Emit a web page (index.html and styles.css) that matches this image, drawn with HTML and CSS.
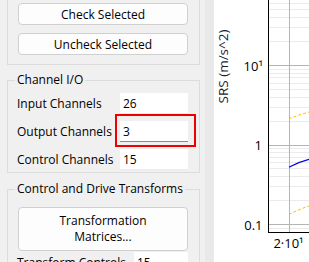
FILE: index.html
```html
<!DOCTYPE html>
<html lang="en">
<head>
  <meta charset="UTF-8" />
  <meta name="viewport" content="width=device-width, initial-scale=1.0"/>
  <title>Channel Setup</title>
  <link rel="stylesheet" href="styles.css">
</head>
<body>

  <div class="panel">
    <fieldset class="group group-top">
      <button class="btn">Check Selected</button>
      <button class="btn">Uncheck Selected</button>
    </fieldset>

    <fieldset class="group group-io">
      <legend>Channel I/O</legend>
      <div class="fields">
        <label>Input Channels</label>
        <input class="num" type="text" value="26">
        <label>Output Channels</label>
        <span class="marked">
          <input class="num focused" type="text" value="3">
          <span class="highlight"></span>
        </span>
        <label>Control Channels</label>
        <input class="num" type="text" value="15">
      </div>
    </fieldset>

    <fieldset class="group group-transforms">
      <legend>Control and Drive Transforms</legend>
      <button class="btn btn-tall">Transformation<br>Matrices...</button>
      <div class="fields fields-transform">
        <label>Transform Controls</label>
        <input class="num" type="text" value="15">
      </div>
    </fieldset>
  </div>

  <div class="splitter"></div>

  <div class="plot">
    <svg width="95" height="262" viewBox="0 0 95 262">
      <g class="minor">
        <line x1="54" x2="95" y1="3.5" y2="3.5"/>
        <line x1="54" x2="95" y1="9.5" y2="9.5"/>
        <line x1="54" x2="95" y1="17.5" y2="17.5"/>
        <line x1="54" x2="95" y1="27.5" y2="27.5"/>
        <line x1="54" x2="95" y1="41.5" y2="41.5"/>
        <line x1="54" x2="95" y1="69.5" y2="69.5"/>
        <line x1="54" x2="95" y1="73.5" y2="73.5"/>
        <line x1="54" x2="95" y1="77.5" y2="77.5"/>
        <line x1="54" x2="95" y1="83.5" y2="83.5"/>
        <line x1="54" x2="95" y1="89.5" y2="89.5"/>
        <line x1="54" x2="95" y1="97.5" y2="97.5"/>
        <line x1="54" x2="95" y1="107.5" y2="107.5"/>
        <line x1="54" x2="95" y1="121.5" y2="121.5"/>
        <line x1="54" x2="95" y1="148.5" y2="148.5"/>
        <line x1="54" x2="95" y1="152.5" y2="152.5"/>
        <line x1="54" x2="95" y1="157.5" y2="157.5"/>
        <line x1="54" x2="95" y1="162.5" y2="162.5"/>
        <line x1="54" x2="95" y1="168.5" y2="168.5"/>
        <line x1="54" x2="95" y1="176.5" y2="176.5"/>
        <line x1="54" x2="95" y1="186.5" y2="186.5"/>
        <line x1="54" x2="95" y1="200.5" y2="200.5"/>
        <line x1="54" x2="95" y1="228.5" y2="228.5"/>
      </g>
      <g class="major">
        <line x1="54" x2="95" y1="65.5" y2="65.5"/>
        <line x1="54" x2="95" y1="145.5" y2="145.5"/>
        <line x1="54" x2="95" y1="224.5" y2="224.5"/>
        <line x1="75.5" x2="75.5" y1="0" y2="232"/>
      </g>

      <path class="curve-limit" d="M75 118.7 C80 116.8 86 114.5 95 112"/>
      <path class="curve-response" d="M75 167.3 C79 165 84 162 95 159.3"/>
      <path class="curve-limit" d="M75 214.3 C79 212.5 86 209 95 206"/>

      <g class="axis">
        <line x1="54.5" x2="54.5" y1="0" y2="233"/>
        <line x1="54" x2="95" y1="232.5" y2="232.5"/>
      </g>

      <g class="ticks">
        <text x="49" y="70.5" text-anchor="end">10¹</text>
        <text x="48" y="150" text-anchor="end">1</text>
        <text x="48.5" y="229.5" text-anchor="end">0.1</text>
        <text x="74.5" y="247.5" text-anchor="middle">2·10¹</text>
      </g>
      <text class="axis-title" transform="translate(13.5 66.5) rotate(-90)" text-anchor="middle">SRS (m/s^2)</text>
    </svg>
  </div>

</body>
</html>
```

FILE: styles.css
```css
html, body {
  margin: 0;
  height: 100%;
}

body {
  font-family: 'Open Sans', 'Noto Sans', sans-serif;
  font-size: 12px;
  color: #000;
  background-color: #f0f0f0;
  display: flex;
  overflow: hidden;
}

.panel {
  width: 205px;
  flex: none;
  display: flex;
  flex-direction: column;
}

.group {
  margin: 0 0 0 7px;
  width: 193px;
  min-width: 0;
  box-sizing: border-box;
  border: 1px solid #dcdcdc;
  padding: 0 10px 0 9px;
}

.group legend {
  padding: 0 2px;
  margin-left: -2px;
  line-height: 16px;
}

.group-top {
  border-top: none;
  padding: 3px 10px 9px 10px;
  display: flex;
  flex-direction: column;
  gap: 8px;
}

.group-io {
  margin-top: 7px;
  padding-top: 5px;
  padding-bottom: 2px;
}

.group-transforms {
  margin-top: 8px;
  padding-top: 10px;
}

.btn {
  height: 22px;
  width: 170px;
  padding: 0;
  font-family: inherit;
  font-size: 12px;
  color: #000;
  background-color: #fdfdfd;
  border: 1px solid #d0d0d0;
  border-radius: 4px;
}

.group-transforms .btn {
  margin-left: 1px;
}

.btn-tall {
  height: 44px;
  line-height: 16px;
}

.fields {
  display: grid;
  grid-template-columns: 103px 68px;
  grid-auto-rows: 21px;
  row-gap: 7px;
  align-items: center;
}

.fields-transform {
  grid-template-columns: 117px 54px;
  margin-top: 1px;
}

.num {
  box-sizing: border-box;
  width: 100%;
  height: 21px;
  margin: 0;
  padding: 0 0 0 3px;
  font-family: inherit;
  font-size: 12px;
  color: #000;
  background-color: #fff;
  border: none;
  border-bottom: 1px solid #ececec;
  outline: none;
}

.num.focused {
  border-bottom-color: #8a8a8a;
}

.marked {
  position: relative;
  display: block;
  height: 21px;
}

.highlight {
  position: absolute;
  top: -7px;
  left: -5px;
  right: -8px;
  bottom: -5px;
  border: 2px solid #ee0000;
}

.splitter {
  width: 9px;
  flex: none;
  background-color: #e9e9e9;
}

.plot {
  flex: 1;
  background-color: #fff;
}

.plot svg {
  display: block;
}

.minor line {
  stroke: #ebebeb;
  stroke-width: 1;
}

.major line {
  stroke: #b4b4b4;
  stroke-width: 1;
}

.axis line {
  stroke: #000;
  stroke-width: 1;
}

.curve-limit {
  fill: none;
  stroke: #f2c200;
  stroke-width: 1;
  stroke-dasharray: 3 2;
}

.curve-response {
  fill: none;
  stroke: #0000e6;
  stroke-width: 1.2;
}

.ticks text {
  font-family: 'Open Sans', sans-serif;
  font-size: 13px;
  fill: #000;
}

.axis-title {
  font-family: 'Open Sans', sans-serif;
  font-size: 13.5px;
  fill: #1a1a33;
}
```
